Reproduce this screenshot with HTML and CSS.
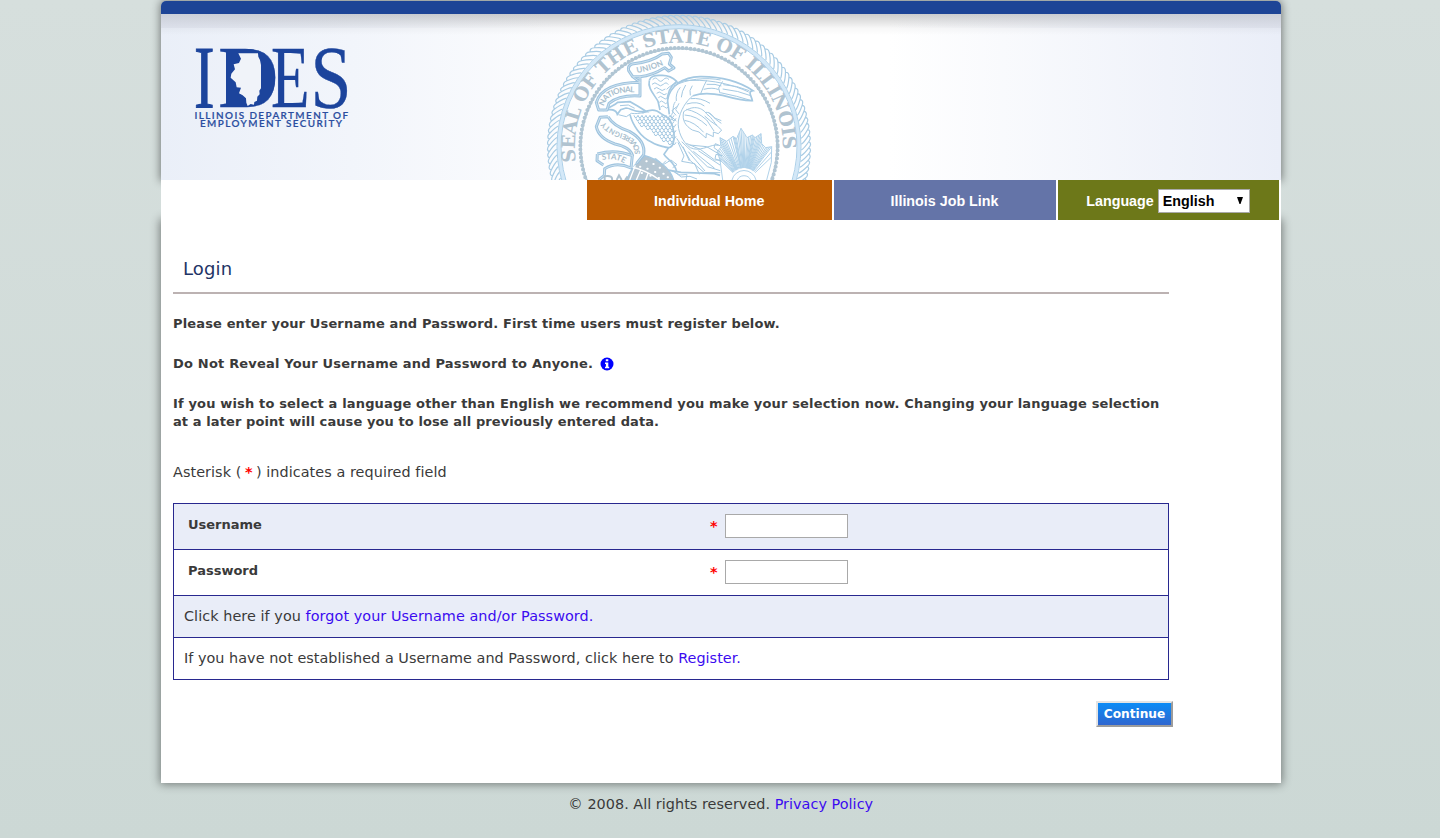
FILE: index.html
```html
<!DOCTYPE html>
<html lang="en">
<head>
<meta charset="utf-8">
<title>IDES - Login</title>
<link rel="stylesheet" href="styles.css">
</head>
<body>
<div class="page">
  <header class="banner">
    <div class="banner-bar"></div>
    <div class="banner-art">
      <svg class="logo" width="160" height="90" viewBox="192 42 160 90" role="img" aria-label="IDES">
        <g class="logo-letters">
          <text class="logo-i" x="195" y="107.4" textLength="20.5" lengthAdjust="spacingAndGlyphs">I</text>
          <text x="219" y="107.4" textLength="60.5" lengthAdjust="spacingAndGlyphs">D</text>
          <text x="272" y="107.4" textLength="38.5" lengthAdjust="spacingAndGlyphs">E</text>
          <text x="311.4" y="107.4" textLength="41" lengthAdjust="spacingAndGlyphs">S</text>
        </g>
        <path class="logo-fill" d="M227 49H246C266 49 276 61 276 78C276 96 266 106.500 247 106.500H227Z"/>
        <path class="logo-map" transform="translate(140 0) scale(.3333)" d="M298 160H357L358 170 363 180 366 195V265L361 272 362 283 355 290 354 302 346 306 345 314 335 312 326 318 322 308 321 295 311 286 300 280 306 263 293 262 290 247 275 233 277 221 288 208 284 193 300 189 306 176Z"/>
        <g class="logo-tag">
          <text x="195.500" y="118.900" textLength="153.500">ILLINOIS DEPARTMENT OF</text>
          <text x="201" y="127" textLength="142">EMPLOYMENT SECURITY</text>
        </g>
      </svg>
      <svg class="seal" width="280" height="166" viewBox="0 42 840 498" role="img" aria-label="Seal of the State of Illinois">
        <defs>
          <path id="motto" d="M108 486A312 312 0 1 1 726 480"/>
          <path id="rb-union" d="M291 219Q340 211 376 192"/>
          <path id="rb-national" d="M191 319Q204 272 290 277"/>
          <path id="rb-sov" d="M300 462Q300 418 250 401Q208 388 191 362"/>
          <path id="rb-state" d="M187 480Q226 472 256 492"/>
          <g id="ribbons">
            <path d="M278 230L266 212Q262 198 276 192Q335 186 366 162L386 160 394 172 388 192 402 204 386 213 374 203Q338 226 300 230ZM278 230L301 247M300 230V288Q238 284 207 310L201 330 176 330 169 308Q186 248 301 247"/>
            <path d="M204 350L180 352 169 380Q176 415 225 432Q272 442 278 468M204 350Q220 378 268 394Q318 422 311 464L290 490"/>
            <path d="M172 462Q225 446 277 467L273 504Q230 484 194 506L193 526 176 540M172 462L171 482 190 495"/>
          </g>
        </defs>
        <g id="rope" class="rope"></g>
        <circle class="ring-wide" cx="417" cy="440" r="360"/>
        <circle class="ring" cx="417" cy="440" r="366"/>
        <circle class="ring" cx="417" cy="440" r="354"/>
        <text class="motto"><textPath href="#motto" textLength="1034">SEAL OF THE STATE OF ILLINOIS</textPath></text>
        <circle class="bead-line" cx="417" cy="440" r="294"/>
        <circle class="beads" cx="417" cy="440" r="296"/>
        <g id="sun" class="sun"></g>
        <g class="eagle">
          <path class="outline" d="M383 298C391 258 428 231 480 230C552 229 604 249 639 272C622 274 634 286 637 302C615 303 584 296 548 286C518 280 482 279 459 287"/>
          <path d="M380 268C398 249 428 240 456 241C519 239 582 255 626 276M402 258C438 237 500 231 542 240"/>
          <path d="M500 241L492 257 482 281M548 244L536 264 540 280M437 255Q425 274 424 292M457 257Q446 271 451 286M421 262Q406 279 409 303"/>
          <path d="M550 254Q590 256 628 272M548 267Q596 272 632 287M541 278Q592 288 635 302M500 253Q528 251 544 258M491 268Q518 261 536 269"/>
          <path d="M459 287C438 303 421 331 415 363C412 393 427 426 451 443C477 456 506 437 526 435L536 436"/>
          <path d="M431 335C463 313 488 324 501 343C520 356 522 372 545 390L535 401 520 396 520 410 499 400 498 414 477 396 457 390C437 378 425 362 431 335"/>
          <path d="M439 328Q471 334 500 360L522 393M434 345Q470 347 501 377M433 361Q463 365 491 397M440 312Q474 302 493 318M452 296Q481 292 510 310"/>
          <path d="M497 337C510 336 519 347 527 358L544 370M494 348Q513 366 531 377M505 337L524 354 544 362"/>
          <path class="outline" d="M328 241C333 225 350 227 363 226C383 225 397 231 410 244C390 260 381 280 383 304L388 343"/>
          <path class="outline" d="M328 241C322 265 344 285 354 304L360 330"/>
          <path d="M338 239q9-10 16 0t16 0 17 0M336 253q9-9 17 0t17 0 15 1M342 267q8-9 16 0t18 0M350 280q8-8 15 0t15 1M355 293q7-8 14 0t13 0M358 307q7-8 13 0t12 0M362 321q7-7 12 0t11 0"/>
          <path class="outline" d="M233 307L270 305 294 319 320 335H299C278 334 271 324 258 324L242 329 232 343C228 327 212 328 197 330C210 319 222 318 233 307Z"/>
          <path d="M240 317L265 315 284 325M235 344L259 350 274 340C286 342 298 340 310 338"/>
          <path class="outline" d="M270 344C278 376 302 411 334 426C353 438 370 440 386 443L372 463C379 476 405 486 410 515M307 339C331 326 349 328 363 341L388 356C401 383 406 409 400 428C397 444 384 446 371 440"/>
          <path d="M406 305C395 320 404 335 392 348L409 363M410 320l-14 12 12 14M417 310l-10 19 10 13"/>
          <path d="M410 415Q434 449 451 482L493 518H541M425 425L452 451 502 500 541 512M439 430L482 449 524 480 545 480M449 435L500 440 547 468M414 427L432 468 425 484 464 491 478 523M429 440L448 483M445 455L495 513M460 454L524 505M475 452L540 495"/>
          <path d="M540 437L526 431 522 443 540 457M541 466L528 463 525 476 543 484"/>
          <path class="outline" d="M343 493C357 491 366 500 377 509L423 517 523 521 540 526M350 496L334 483 347 477 361 489"/>
          <path d="M363 497L378 482M351 502L370 516 379 540M377 508L392 523 388 540M393 511L420 525 441 523 438 540M370 494L393 480 411 494 398 503M405 517L424 531 450 529 471 537"/>
        </g>
        <g id="plumage" class="eagle"></g>
        <g class="shield">
          <path class="shield-fill" d="M315 467C347 476 389 499 401 540H260C271 511 290 484 315 467Z"/>
          <path class="shield-stripes" d="M286 496L269 540M303 508L289 540M324 520L317 540M276 501Q321 512 359 540"/>
          <path class="shield-stars" d="M319 484h1M340 492h1M359 503h1M300 500h1M322 506h1M345 516h1M370 521h1M305 519h1M331 527h1M356 534h1M383 532h1"/>
        </g>
        <use class="ribbon-edge" href="#ribbons"/>
        <use class="ribbon-core" href="#ribbons"/>
        <g class="ribbon-text">
          <text><textPath href="#rb-union" textLength="84">UNION</textPath></text>
          <text><textPath href="#rb-national" textLength="110">NATIONAL</textPath></text>
          <text class="ribbon-small"><textPath href="#rb-sov" textLength="154">SOVEREIGNTY</textPath></text>
          <text><textPath href="#rb-state" textLength="68">STATE</textPath></text>
        </g>
        <path class="shield-stripes" d="M194 540V529Q219 525 216 540M230 540L237 526 245 540M263 529L255 540"/>
      </svg>
    </div>
  </header>

  <nav class="menu">
    <a class="menu-item menu-home" href="#">Individual Home</a>
    <a class="menu-item menu-job" href="#">Illinois Job Link</a>
    <div class="menu-item menu-lang">
      <label for="lang">Language</label>
      <span class="picker">
        <select id="lang"><option>English</option></select>
        <svg class="picker-arrow" width="6" height="7" viewBox="0 0 6 7"><path d="M0 0H6L3.500 7H2.500Z"/></svg>
      </span>
    </div>
  </nav>

  <main class="content">
    <h1 class="title">Login</h1>
    <div class="notes">
      <p class="note note-a">Please enter your Username and Password. First time users must register below.</p>
      <p class="note note-b"><span>Do Not Reveal Your Username and Password to Anyone.</span>
        <svg class="info" width="14" height="14" viewBox="0 0 14 14"><circle cx="7" cy="7" r="6.500"/><path d="M5.800 2.200h2.500v2H5.800zM5 5.400h3.300v4.300h.9v1.500H5V9.700h.9V6.900H5z"/></svg>
      </p>
      <p class="note note-c"><span class="line-1">If you wish to select a language other than English we recommend you make your selection now. Changing your language selection</span><br><span class="line-2">at a later point will cause you to lose all previously entered data.</span></p>
    </div>
    <p class="hint">Asterisk (<span class="star">*</span>) indicates a required field</p>

    <form class="grid">
      <div class="row field">
        <label for="user">Username</label>
        <span class="star">*</span>
        <input id="user" type="text">
      </div>
      <div class="row field">
        <label for="pass">Password</label>
        <span class="star">*</span>
        <input id="pass" type="password">
      </div>
      <div class="row link-row forgot"><p>Click here if you <a href="#">forgot your Username and/or Password.</a></p></div>
      <div class="row link-row register"><p>If you have not established a Username and Password, click here to <a href="#">Register.</a></p></div>
    </form>
    <div class="actions"><button class="continue" type="button">Continue</button></div>
  </main>
  <footer class="footer">© 2008. All rights reserved. <a href="#">Privacy Policy</a></footer>
</div>
<script src="seal.js"></script>
</body>
</html>
```
FILE: styles.css
```css
* { box-sizing: border-box; }
body {
  margin: 0;
  min-height: 838px;
  background: linear-gradient(#d6dfdd, #ccd8d5);
  color: #3a3a3a;
  font: 14.4px/18px Verdana, "DejaVu Sans", sans-serif;
  overflow: hidden;
}
a { color: #3b0bf0; text-decoration: none; }
p { margin: 0; white-space: nowrap; }
.page { width: 1119.5px; margin: 0 0 0 161px; padding-top: 1px; }

.banner {
  height: 179px;
  border-radius: 5px 5px 0 0;
  box-shadow: 0 0 9px 1px rgba(0, 0, 0, .45);
}
.banner-bar { height: 13px; background: #1d4496; border-radius: 5px 5px 0 0; }
.banner-art {
  height: 166px;
  display: flex;
  align-items: flex-start;
  background:
    linear-gradient(90deg, rgba(215, 219, 230, .6), transparent 35%, transparent 65%, rgba(215, 219, 230, .6)) 0 0 / 100% 14px no-repeat,
    linear-gradient(rgba(0, 0, 0, .2), rgba(0, 0, 0, .13) 6px, rgba(0, 0, 0, .03) 14px, transparent 21px),
    linear-gradient(90deg, #eaeff8, #f2f5fb 17%, #fff 42%, #fff 65%, #eaeef8);
}
.logo { margin: 28px 0 0 30px; flex: none; overflow: visible; }
.logo-letters { font: 89px "Liberation Serif", serif; fill: #1c449c; stroke: #1c449c; stroke-width: .4px; }
.logo-i { stroke-width: 1px; }
.logo-fill { fill: #1c449c; }
.logo-map { fill: #f0f3f9; }
.logo-tag { font: 600 9.9px Lato, sans-serif; fill: #2b4ea0; stroke: #2b4ea0; stroke-width: .2px; }
.seal { margin-left: 189px; flex: none; }
.rope, .sun, .eagle { fill: none; stroke: #a5c9e2; stroke-width: 3; }
.rope { stroke: #a9cce4; stroke-width: 3.6; }
.sun { stroke: #b0d2ea; stroke-width: 3; }
.outline { stroke-width: 5; }
.ring-wide { fill: none; stroke: #d3e8f8; stroke-width: 10; }
.ring { fill: none; stroke: #acd0e9; stroke-width: 3; }
.motto { font: bold 56px "DejaVu Serif", serif; fill: #b0c3d0; }
.bead-line { fill: none; stroke: #b8cbd8; stroke-width: 5; }
.beads { fill: none; stroke: #b0c5d3; stroke-width: 12; stroke-linecap: round; stroke-dasharray: 0 12.1; }
.ribbon-edge { fill: none; stroke: #9fc4df; stroke-width: 9; stroke-linejoin: round; }
.ribbon-core { fill: none; stroke: #cfe2ef; stroke-width: 3; stroke-linejoin: round; }
.ribbon-text { font: bold 24px Lato, sans-serif; fill: #a8becd; }
.ribbon-small { font-size: 22px; }
.shield-fill { fill: #b5c6d2; stroke: #a5c9e2; stroke-width: 4; }
.shield-stripes { fill: none; stroke: #b0c3d0; stroke-width: 6; }
.shield .shield-stripes { stroke: #fff; stroke-width: 4; }
.shield-stars { fill: none; stroke: #fff; stroke-width: 6; stroke-linecap: round; }

.menu {
  position: relative;
  height: 40px;
  padding-right: 2px;
  display: flex;
  justify-content: flex-end;
  gap: 2px;
  background: #fff;
  font: bold 14.3px "Liberation Sans", sans-serif;
}
.menu-item { display: flex; align-items: center; justify-content: center; color: #fff; padding-top: 2px; }
.menu-home { width: 244.5px; background: #bb5a00; }
.menu-job { width: 222px; background: #6474a8; }
.menu-lang { width: 221px; gap: 4px; background: #6d7819; }
.picker { position: relative; display: flex; }
.picker select {
  appearance: none;
  width: 92px;
  height: 24px;
  padding: 0 0 0 4px;
  border: 1px solid #a9a9a9;
  border-radius: 0;
  background: #fff;
  color: #000;
  font: inherit;
}
.picker-arrow { position: absolute; right: 7px; top: 8px; }

.content {
  height: 563px;
  padding: 38px 0 0 12px;
  background: #fff;
  box-shadow: 0 0 9px 1px rgba(0, 0, 0, .45);
}
.title {
  width: 996px;
  height: 36px;
  margin: 0;
  padding-left: 10px;
  border-bottom: 2px solid #bcb2b2;
  color: #1f3566;
  font-size: 18px;
  font-weight: normal;
  letter-spacing: .15px;
  line-height: 21px;
}
.notes { padding-top: 21px; display: flex; flex-direction: column; gap: 22px; font-weight: bold; font-size: 13px; }
.note-a { letter-spacing: .14px; }
.note-b { display: flex; align-items: center; gap: 7px; letter-spacing: .19px; }
.info circle { fill: #00f; }
.info path { fill: #fff; }
.line-1 { letter-spacing: .156px; }
.line-2 { letter-spacing: .09px; }
.hint { margin-top: 32px; letter-spacing: .06px; }
.star { color: red; font-weight: bold; }
.hint .star { margin: 0 3.5px; }

.grid { width: 996px; margin-top: 22px; border: 1px solid #28288f; }
.row { border-bottom: 1px solid #28288f; }
.row:nth-child(odd) { background: #e9edf8; }
.field { height: 46px; padding: 10px 0 0 14px; display: flex; }
.field label { width: 522px; padding-top: 2px; font-weight: bold; font-size: 13px; }
.field .star { width: 15px; padding-top: 3px; }
.field input { width: 123px; height: 24px; padding: 0; border: 1px solid #a9a9a9; background: #fff; }
.link-row { height: 42px; padding: 11px 0 0 10px; }
.row:last-child { height: 41px; border-bottom: 0; }
.forgot { letter-spacing: .06px; }
.register { letter-spacing: .03px; }
.actions { width: 1000px; padding-top: 21px; display: flex; justify-content: flex-end; }
.continue {
  width: 77px;
  height: 26px;
  padding: 0;
  border: 2px solid;
  border-color: #e4e4e4 #9c9c9c #9c9c9c #e4e4e4;
  background: linear-gradient(#0c8cf6, #2f66cf);
  color: #fff;
  font: bold 12.2px Verdana, "DejaVu Sans", sans-serif;
}
.footer { padding-top: 12px; text-align: center; white-space: nowrap; letter-spacing: .03px; }
```
FILE: seal.js
```js
// Repeating strokes of the seal: rope border, sun rays and breast feathers.
const NS = 'http://www.w3.org/2000/svg';
function stroke(id, d) {
  const p = document.createElementNS(NS, 'path');
  p.setAttribute('d', d);
  document.getElementById(id).appendChild(p);
}
const at = (cx, cy, r, a) => (cx + r * Math.cos(a)).toFixed(1) + ' ' + (cy + r * Math.sin(a)).toFixed(1);

let rope = '';
for (let i = 0; i < 132; i++) {
  const a = i * 2 * Math.PI / 132;
  rope += `M${at(417, 440, 367, a + 0.075)}Q${at(417, 440, 376, a + 0.06)} ${at(417, 440, 390, a + 0.008)}Q${at(417, 440, 400, a - 0.025)} ${at(417, 440, 389, a - 0.04)}`;
}
stroke('rope', rope);

const tips = [[540, 480], [532, 455], [543, 441], [540, 413], [560, 424], [579, 409], [590, 416], [603, 385], [621, 413], [637, 405], [645, 413], [663, 401], [665, 431], [677, 443], [695, 440], [694, 487]];
let sun = '';
for (let i = 0; i < tips.length - 1; i++) {
  for (let k = 0; k < 3; k++) {
    const x = tips[i][0] + (tips[i + 1][0] - tips[i][0]) * k / 3;
    const y = tips[i][1] + (tips[i + 1][1] - tips[i][1]) * k / 3;
    const a = Math.atan2(y - 550, x - 612);
    sun += `M${at(612, 550, 46, a)}L${x} ${y}`;
  }
}
stroke('sun', sun + 'M' + tips.map(t => t.join(' ')).join('L'));
stroke('sun', 'M576 540A37 37 0 0 1 648 540M592 540A22 22 0 0 1 632 540M540 480L548 540M694 487L680 540');

let feathers = '';
for (let row = 0; row < 10; row++) {
  for (let col = 0; col < 10; col++) {
    const x = 282 + col * 12 + (row % 2) * 6;
    const y = 346 + row * 9;
    if (x < 398 && y < 352 + (x - 270) * 0.72) feathers += `M${x} ${y}q2 8 6 7t6-7`;
  }
}
stroke('plumage', feathers);
```
